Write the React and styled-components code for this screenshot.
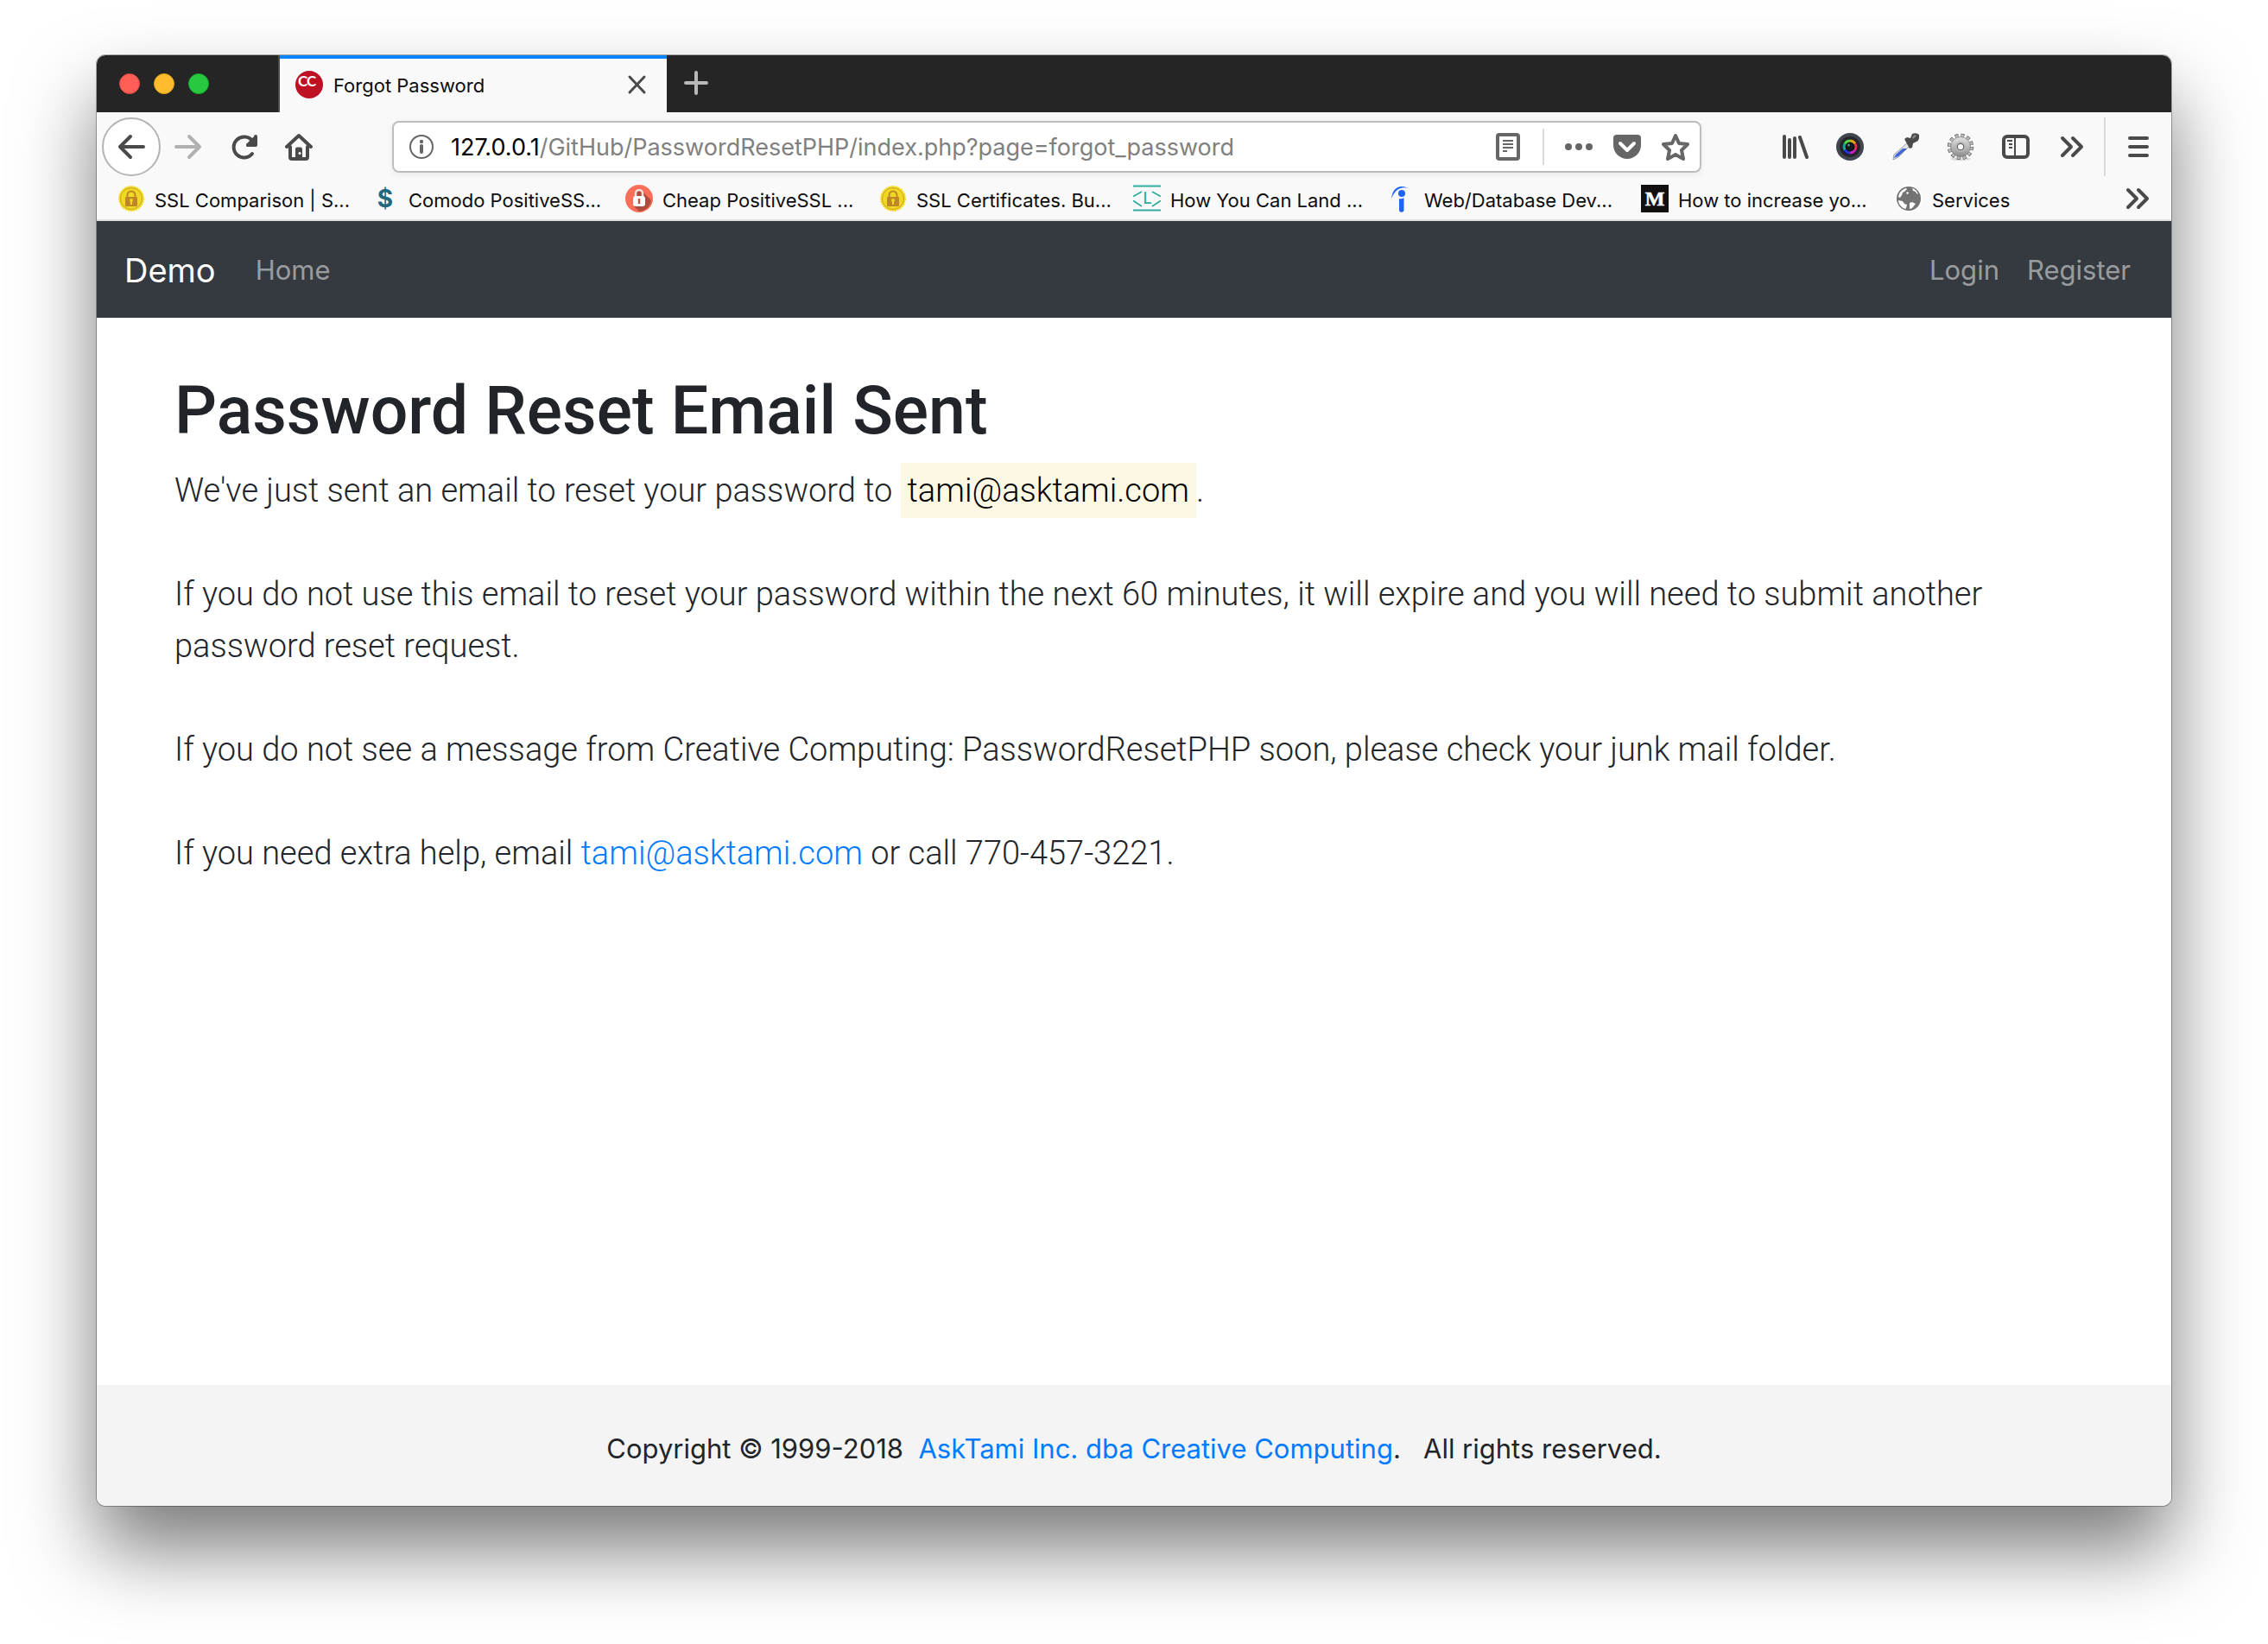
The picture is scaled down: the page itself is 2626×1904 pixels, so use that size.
import React from "react";
import styled, { createGlobalStyle } from "styled-components";

const GlobalStyle = createGlobalStyle`
  * { box-sizing: border-box; }
  body {
    margin: 0;
    background: #fff;
    font-family: Inter, "Liberation Sans", sans-serif;
    color: #212529;
  }
  button, input { font: inherit; }
  a { text-decoration: none; }
`;

const Desktop = styled.div`
  min-height: 100vh;
  padding: 64px 112px 160px;
  display: flex;
`;

const BrowserWindow = styled.div`
  flex: 1;
  min-width: 0;
  display: flex;
  flex-direction: column;
  border-radius: 10px;
  overflow: hidden;
  background: #fff;
  box-shadow: 0 0 0 1px rgba(0, 0, 0, 0.3), 0 50px 90px rgba(0, 0, 0, 0.52);
`;

/* ---------- tab strip ---------- */

const TabStrip = styled.div`
  height: 66px;
  display: flex;
  align-items: stretch;
  background: #252525;
`;

const WindowControls = styled.div`
  width: 212px;
  padding-left: 26px;
  display: flex;
  align-items: center;
  gap: 16px;
  border-right: 2px solid #4b4b4b;
`;

const Light = styled.button`
  width: 24px;
  height: 24px;
  padding: 0;
  border: 1px solid ${(p) => p.$edge};
  border-radius: 50%;
  background: ${(p) => p.$fill};
`;

const Tab = styled.div`
  width: 448px;
  padding: 0 18px 2px;
  display: flex;
  align-items: center;
  gap: 12px;
  border-top: 4px solid #0a84ff;
  background: #f9f9fa;
`;

const TabTitle = styled.span`
  flex: 1;
  padding-top: 2px;
  font-size: 22px;
  line-height: 28px;
  color: #0c0c0d;
`;

const IconButton = styled.button`
  flex: none;
  width: ${(p) => p.$w || 64}px;
  height: ${(p) => p.$h || 64}px;
  padding: 0;
  display: flex;
  align-items: center;
  justify-content: center;
  border: 0;
  background: none;
  color: ${(p) => p.$color || "#4a4a4a"};
`;

const Icon = styled.svg.attrs({ viewBox: "0 0 32 32", "aria-hidden": true })`
  flex: none;
  width: 32px;
  height: 32px;
  display: block;
  fill: none;
  stroke: currentColor;
  stroke-width: 4;
  stroke-linecap: round;
  stroke-linejoin: round;
`;

const Picture = styled.svg.attrs({ viewBox: "0 0 32 32", "aria-hidden": true })`
  flex: none;
  width: 32px;
  height: 32px;
  display: block;
`;

/* ---------- toolbar ---------- */

const Toolbar = styled.div`
  height: 76px;
  padding: 4px 6px 0;
  display: flex;
  align-items: center;
  background: #f9f9fa;
`;

const BackButton = styled(IconButton)`
  width: 68px;
  height: 68px;
  border: 2px solid #b4b4b4;
  border-radius: 50%;
  background: #fff;
`;

const AddressBar = styled.form`
  flex: 1;
  min-width: 0;
  height: 60px;
  margin: 0 76px;
  padding: 0 0 0 16px;
  display: flex;
  align-items: center;
  border: 2px solid #bdbdbd;
  border-radius: 8px;
  background: #fff;
  box-shadow: 0 2px 8px rgba(0, 0, 0, 0.06);
  color: #666;
`;

const Host = styled.label`
  padding: 2px 0 0 18px;
  font-size: 27px;
  line-height: 36px;
  color: #000;
`;

const PathInput = styled.input`
  flex: 1;
  min-width: 0;
  padding: 2px 0 0;
  border: 0;
  outline: 0;
  background: none;
  font-size: 27px;
  line-height: 36px;
  color: #808080;
`;

const Divider = styled.div`
  width: 2px;
  height: ${(p) => p.$h}px;
  margin: 0 ${(p) => p.$m || 0}px;
  background: #dadadb;
`;

const Bookmarks = styled.nav`
  height: 50px;
  padding: 0 8px 0 24px;
  display: flex;
  align-items: center;
  border-bottom: 2px solid #e0e0e1;
  background: #f9f9fa;
`;

const Bookmark = styled.a`
  flex: 0 0 294px;
  display: flex;
  align-items: center;
  gap: 11px;
  font-size: 22px;
  line-height: 28px;
  white-space: nowrap;
  color: #0c0c0d;

  &:last-of-type {
    flex: 1;
  }
`;

const BookmarkLabel = styled.span`
  padding-top: 3px;
`;

const Spacer = styled.div`
  flex: 1;
`;

/* ---------- page ---------- */

const Navbar = styled.nav`
  height: 112px;
  padding: 2px 47px 0 32px;
  display: flex;
  align-items: center;
  gap: 32px;
  background: #343a40;
`;

const Brand = styled.a`
  margin-right: 14px;
  font-size: 38px;
  line-height: 60px;
  color: #fff;
`;

const NavLink = styled.a`
  font-size: 31px;
  line-height: 48px;
  color: rgba(255, 255, 255, 0.5);
`;

const Main = styled.main`
  flex: 1;
  padding: 60px 90px;
  font-family: Roboto, "Liberation Sans", sans-serif;
`;

const Title = styled.h1`
  margin: 0 0 14px;
  font-size: 77px;
  font-weight: 500;
  line-height: 96px;
`;

const Lead = styled.p`
  margin: 0 0 60px;
  font-size: 38px;
  font-weight: 300;
  line-height: 60px;
`;

const Address = styled.mark`
  padding: 10px 8px;
  background: #fcf8e3;
  color: #000;
`;

const Link = styled.a`
  color: #007bff;
`;

const Footer = styled.footer`
  height: 140px;
  padding-top: 8px;
  display: flex;
  align-items: center;
  justify-content: center;
  background: #f4f4f4;
  font-size: 31px;
  line-height: 48px;
  white-space: pre;
`;

/* ---------- drawings ---------- */

const SiteIcon = () => (
  <Picture>
    <circle cx="16" cy="16" r="16" fill="#be1124" />
    <text x="3" y="18" fontFamily="Lato, sans-serif" fontWeight="700" fontSize="17" fill="#fff">C</text>
    <text x="13" y="18" fontFamily="Lato, sans-serif" fontWeight="700" fontSize="17" fill="#fff">C</text>
  </Picture>
);

const GoldLock = () => (
  <Picture>
    <circle cx="16" cy="16" r="14" fill="#f0dc28" stroke="#f0dc28" strokeWidth="2" strokeDasharray="2 1" />
    <circle cx="16" cy="16" r="12.5" fill="#efd922" stroke="#cfa126" strokeWidth="1" />
    <path d="M11.500 15v-3a4.500 4.500 0 0 1 9 0v3" fill="none" stroke="#bf8526" strokeWidth="2" />
    <rect x="9" y="14" width="14" height="11" rx="1" fill="#bf8526" />
    <circle cx="16" cy="18" r="2" fill="#efd922" />
    <path d="M15 18h2v5h-2z" fill="#efd922" />
  </Picture>
);

const Dollar = () => (
  <Picture>
    <text x="16" y="26" textAnchor="middle" fontFamily="Inter, sans-serif" fontWeight="700" fontSize="28" fill="#24697a">$</text>
  </Picture>
);

const RedLock = () => (
  <Picture>
    <circle cx="16" cy="16" r="16" fill="#fb6e57" />
    <path d="M21 9 30 18a15 15 0 0 1-14 13l-6-6z" fill="#b04c3d" />
    <path d="M12 14V10a4 4 0 0 1 8 0v4" fill="#b04c3d" stroke="#f3e3e0" strokeWidth="2.500" />
    <rect x="9" y="13" width="14" height="12" rx="3" fill="#fff" />
    <path d="M16 16v6" stroke="#c35746" strokeWidth="2.500" />
  </Picture>
);

const CodeL = () => (
  <Picture>
    <path d="M0 1.500h32M0 29.500h32" stroke="#2fae9f" strokeWidth="2" />
    <path d="M10 8 1 13v1M1 18v1l9 6M22 8l9 5v1M31 18v1l-9 6" stroke="#2fae9f" strokeWidth="1.800" fill="none" />
    <text x="16.500" y="22" textAnchor="middle" fontFamily="Inter, sans-serif" fontWeight="500" fontSize="18" fill="#2fae9f">L</text>
  </Picture>
);

const LetterI = () => (
  <Picture>
    <path d="M5 16C6 6 12-2 25 4 15 1 9 6 5 16z" fill="#2164f3" />
    <circle cx="17" cy="10" r="4" fill="#2164f3" />
    <path d="M14 16q3 1 5.500-1v14a2.700 2.700 0 0 1-5.500 0z" fill="#2164f3" />
  </Picture>
);

const LetterM = () => (
  <Picture>
    <rect width="32" height="32" fill="#12100e" />
    <text x="16" y="24" textAnchor="middle" fontFamily="Liberation Serif, serif" fontWeight="700" fontSize="24" fill="#fff" stroke="#fff" strokeWidth="0.600">M</text>
  </Picture>
);

const Globe = () => (
  <Picture>
    <circle cx="16" cy="16" r="16" fill="#fff" />
    <circle cx="16" cy="16" r="14" fill="#737373" />
    <path d="M4 14C5 8 9 5 13 4l1 1-3 3-2 1-1 3-2 3z" fill="#fff" />
    <path d="M4 18l5 1 2 3 3 1-1 4-1 1C7 26 4 22 4 18z" fill="#fff" />
    <path d="M20 4c4 1 6 4 7 7l-2-1-1-2-3-1z" fill="#fff" />
    <path d="M17 21l3-1 4 2-4 5-3 1z" fill="#fff" />
    <path d="M13 9l2-1 1 2-2 1z" fill="#fff" />
  </Picture>
);

const Lens = () => (
  <Picture>
    <circle cx="16" cy="16" r="16" fill="#42464e" />
    <circle cx="16" cy="16" r="12" fill="#24262b" />
    <circle cx="16" cy="16" r="9" fill="#08080a" />
    <g fill="none" strokeWidth="3">
      <path d="M10 12.500A7 7 0 0 1 16 9" stroke="#4fd64a" />
      <path d="M16 9a7 7 0 0 1 6 3.500" stroke="#e8a020" />
      <path d="M22 12.500a7 7 0 0 1 0 7" stroke="#ee2a55" />
      <path d="M22 19.500A7 7 0 0 1 16 23" stroke="#d01fc0" />
      <path d="M16 23a7 7 0 0 1-6-3.500" stroke="#2a35d8" />
      <path d="M10 19.500a7 7 0 0 1 0-7" stroke="#16a89a" />
    </g>
    <circle cx="16" cy="16" r="4.500" fill="#111a1c" />
    <circle cx="14.500" cy="14" r="1.500" fill="#4c8b85" />
  </Picture>
);

const Dropper = () => (
  <Picture>
    <path d="M20 10 23 13 8 28l-6 3 1-6z" fill="#e3e6ec" stroke="#9a9da3" strokeWidth="1" />
    <path d="M13 18h5L8 27l-5 2 2-4z" fill="#3f66d8" />
    <path d="M15 7l3-2 4 1 2-5q5-2 8 1 1 6-3 8l-4 2-1 5-3 1z" fill="#4b4b4b" />
    <path d="M24 5l3-3 2 1-4 4z" fill="#8a8a8a" />
  </Picture>
);

const Gear = () => (
  <Picture>
    <defs>
      <linearGradient id="gearMetal" x1="0" y1="0" x2="0" y2="1">
        <stop offset="0" stopColor="#e2e2e2" />
        <stop offset="1" stopColor="#8e8e8e" />
      </linearGradient>
    </defs>
    <ellipse cx="16" cy="30" rx="12" ry="2" fill="#dcdcdc" />
    <circle cx="16" cy="16" r="13" fill="none" stroke="#666" strokeWidth="4.500" strokeDasharray="4 2.807" />
    <circle cx="16" cy="16" r="12.700" fill="none" stroke="#bcbcbc" strokeWidth="3.500" strokeDasharray="2.800 3.850" strokeDashoffset="-0.600" />
    <circle cx="16" cy="16" r="11.500" fill="url(#gearMetal)" stroke="#777" strokeWidth="0.700" />
    <circle cx="16" cy="16" r="6" fill="#b8b8b8" />
    <circle cx="16" cy="16" r="3.700" fill="#fff" stroke="#666" strokeWidth="1.200" />
  </Picture>
);

const DoubleChevron = () => (
  <Icon><path d="M6 6l10 10L6 26M18 6l10 10L18 26" /></Icon>
);

const bookmarks = [
  { icon: <GoldLock />, label: "SSL Comparison | S..." },
  { icon: <Dollar />, label: "Comodo PositiveSS..." },
  { icon: <RedLock />, label: "Cheap PositiveSSL ..." },
  { icon: <GoldLock />, label: "SSL Certificates. Bu..." },
  { icon: <CodeL />, label: "How You Can Land ..." },
  { icon: <LetterI />, label: "Web/Database Dev..." },
  { icon: <LetterM />, label: "How to increase yo..." },
  { icon: <Globe />, label: "Services" },
];

export default function App() {
  return (
    <>
      <GlobalStyle />
      <Desktop>
        <BrowserWindow>
          <TabStrip>
            <WindowControls>
              <Light aria-label="Close window" $fill="#ff5f57" $edge="#e2463f" />
              <Light aria-label="Minimize window" $fill="#ffbd2e" $edge="#e1a116" />
              <Light aria-label="Zoom window" $fill="#28c940" $edge="#12ac28" />
            </WindowControls>
            <Tab>
              <SiteIcon />
              <TabTitle>Forgot Password</TabTitle>
              <IconButton aria-label="Close tab" $w={32} $h={32}>
                <Icon><path d="M7 7l17 18M24 7L7 25" strokeWidth="3" /></Icon>
              </IconButton>
            </Tab>
            <IconButton aria-label="New tab" $w={68} $color="#b9b9ba">
              <Icon><path d="M16 4v24M4 16h24" /></Icon>
            </IconButton>
          </TabStrip>

          <Toolbar>
            <BackButton aria-label="Back">
              <Icon><path d="M30 16H4M15 4L3 16l12 12" /></Icon>
            </BackButton>
            <IconButton aria-label="Forward" $color="#b1b1b1">
              <Icon><path d="M2 16h26M17 4l12 12-12 12" /></Icon>
            </IconButton>
            <IconButton aria-label="Reload">
              <Icon>
                <path d="M26 24A12 12 0 1 1 26 9" />
                <path d="M21 14h9V4" />
                <path d="M29 6v8h-8z" fill="currentColor" />
              </Icon>
            </IconButton>
            <IconButton aria-label="Home">
              <Icon>
                <path d="M2 16L16 3l14 13M6 16v12q0 2 2 2h16q2 0 2-2V16" />
                <path d="M12 30V18.500q0-2 2-2h4q2 0 2 2V30z" fill="currentColor" stroke="none" />
                <circle cx="17" cy="23.500" r="1.500" fill="#fff" stroke="none" />
              </Icon>
            </IconButton>

            <AddressBar>
              <Icon>
                <circle cx="16" cy="16" r="13" strokeWidth="2" />
                <path d="M16 15v7" />
                <circle cx="16" cy="10" r="2.200" fill="currentColor" stroke="none" />
              </Icon>
              <Host htmlFor="address">127.0.0.1</Host>
              <PathInput
                id="address"
                defaultValue="/GitHub/PasswordResetPHP/index.php?page=forgot_password"
              />
              <IconButton type="button" aria-label="Reader view" $w={56} $h={56} $color="#666">
                <Icon>
                  <rect x="4" y="2" width="24" height="28" rx="2" />
                  <path d="M10 9h12M10 13h12M10 17h12M10 21h5" strokeWidth="2" strokeLinecap="butt" />
                </Icon>
              </IconButton>
              <Divider $h={42} $m={12} />
              <IconButton type="button" aria-label="Page actions" $w={56} $h={56} $color="#666">
                <Icon>
                  <g fill="currentColor" stroke="none">
                    <circle cx="4" cy="16" r="4" />
                    <circle cx="16" cy="16" r="4" />
                    <circle cx="28" cy="16" r="4" />
                  </g>
                </Icon>
              </IconButton>
              <IconButton type="button" aria-label="Save to Pocket" $w={56} $h={56} $color="#666">
                <Icon>
                  <path d="M4 2h24q4 0 4 4v8a16 16 0 0 1-32 0V6q0-4 4-4z" fill="currentColor" stroke="none" />
                  <path d="M8 12l8 8 8-8" stroke="#fff" />
                </Icon>
              </IconButton>
              <IconButton type="button" aria-label="Bookmark this page" $w={56} $h={56} $color="#666">
                <Icon>
                  <path d="M16 3l4 9 10 1-7 7 2 10-9-5-9 5 2-10-7-7 10-1z" />
                </Icon>
              </IconButton>
            </AddressBar>

            <IconButton aria-label="Library">
              <Icon><path d="M4 4v24M10 8v20M16 6v22M22 5l8 23" /></Icon>
            </IconButton>
            <IconButton aria-label="Camera"><Lens /></IconButton>
            <IconButton aria-label="Color picker"><Dropper /></IconButton>
            <IconButton aria-label="Settings"><Gear /></IconButton>
            <IconButton aria-label="Sidebars">
              <Icon>
                <rect x="2" y="4" width="28" height="24" rx="4" />
                <path d="M15 4v24M6 9h6M8 13h4M8 17h4" strokeWidth="2" strokeLinecap="butt" />
              </Icon>
            </IconButton>
            <IconButton aria-label="More tools"><DoubleChevron /></IconButton>
            <Divider $h={68} $m={6} />
            <IconButton aria-label="Menu">
              <Icon><path d="M6 6h20M6 16h20M6 26h20" /></Icon>
            </IconButton>
          </Toolbar>

          <Bookmarks>
            {bookmarks.map((b) => (
              <Bookmark href="#" key={b.label}>
                {b.icon}
                <BookmarkLabel>{b.label}</BookmarkLabel>
              </Bookmark>
            ))}
            <IconButton aria-label="More bookmarks" $h={44}><DoubleChevron /></IconButton>
          </Bookmarks>

          <Navbar>
            <Brand href="#">Demo</Brand>
            <NavLink href="#">Home</NavLink>
            <Spacer />
            <NavLink href="#">Login</NavLink>
            <NavLink href="#">Register</NavLink>
          </Navbar>

          <Main>
            <Title>Password Reset Email Sent</Title>
            <Lead>
              We've just sent an email to reset your password to <Address>tami@asktami.com</Address>.
            </Lead>
            <Lead>
              If you do not use this email to reset your password within the next 60 minutes, it will
              expire and you will need to submit another password reset request.
            </Lead>
            <Lead>
              If you do not see a message from Creative Computing: PasswordResetPHP soon, please check
              your junk mail folder.
            </Lead>
            <Lead>
              If you need extra help, email <Link href="#">tami@asktami.com</Link> or call 770-457-3221.
            </Lead>
          </Main>

          <Footer>
            {"Copyright © 1999-2018 \u00a0"}
            <Link href="#">AskTami Inc. dba Creative Computing</Link>
            {". \u00a0 All rights reserved."}
          </Footer>
        </BrowserWindow>
      </Desktop>
    </>
  );
}
